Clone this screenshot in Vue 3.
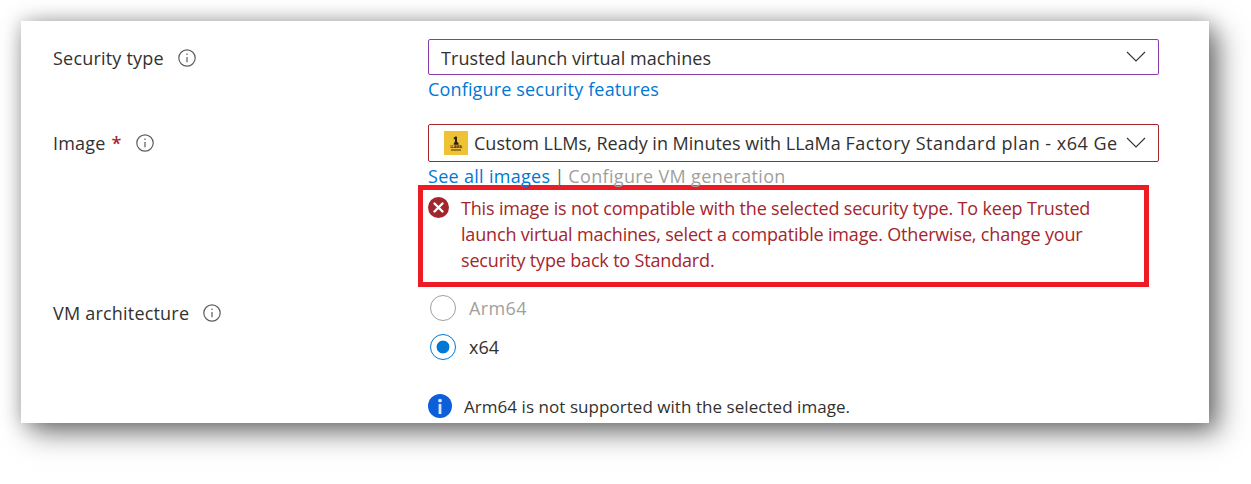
<template>
  <div class="page">
    <div class="card">
      <div class="row first">
        <div class="label">
          <span>Security type</span>
          <svg class="info" viewBox="0 0 18 18"><circle cx="9" cy="9" r="8.2" /><path d="M9 8v5.2M9 4.6v1.4" /></svg>
        </div>
        <div class="field">
          <div class="select purple">
            <span class="value">Trusted launch virtual machines</span>
            <svg class="chevron" viewBox="0 0 20 12"><path d="M1 1l9 9 9-9" /></svg>
          </div>
          <a class="link">Configure security features</a>
        </div>
      </div>

      <div class="row second">
        <div class="label">
          <span>Image <b class="req">*</b></span>
          <svg class="info" viewBox="0 0 18 18"><circle cx="9" cy="9" r="8.2" /><path d="M9 8v5.2M9 4.6v1.4" /></svg>
        </div>
        <div class="field">
          <div class="select red">
            <svg class="logo" viewBox="0 0 24 24">
              <rect width="24" height="24" fill="#eec234" />
              <path d="M9.8 6.6l2.2-1.4 1 .7v5.2l1.2.4.6 2.3H9.6l.4-2 .9-.6V7.9l-1.1.3z" fill="#2b2312" />
              <text x="12" y="17" text-anchor="middle" class="logo-text">LLAMA</text>
              <rect x="7" y="18.4" width="10" height="1.2" fill="#5e4e1c" />
            </svg>
            <span class="value">Custom LLMs, Ready in Minutes with LLaMa <span class="tail">Factory Standard plan - x64 Gen2</span></span>
            <svg class="chevron" viewBox="0 0 20 12"><path d="M1 1l9 9 9-9" /></svg>
          </div>
          <div class="links">
            <a class="link">See all images</a>
            <span class="sep">|</span>
            <span class="disabled">Configure VM generation</span>
          </div>
          <div class="error">
            <svg class="err-icon" viewBox="0 0 21 21">
              <circle cx="10.5" cy="10.5" r="10.5" fill="#a4262c" />
              <path d="M6.5 6.5l8 8M14.5 6.5l-8 8" stroke="#fff" stroke-width="2.4" stroke-linecap="round" />
            </svg>
            <p>This image is not compatible with the selected security type. To keep Trusted launch virtual machines, select a compatible image. Otherwise, change your security type back to Standard.</p>
          </div>
        </div>
      </div>

      <div class="row third">
        <div class="label">
          <span>VM architecture</span>
          <svg class="info" viewBox="0 0 18 18"><circle cx="9" cy="9" r="8.2" /><path d="M9 8v5.2M9 4.6v1.4" /></svg>
        </div>
        <div class="field">
          <div class="radio off"><i class="dot"></i><span>Arm64</span></div>
          <div class="radio on"><i class="dot"></i><span>x64</span></div>
          <div class="note">
            <svg class="note-icon" viewBox="0 0 24 24">
              <circle cx="12" cy="12" r="12" fill="#0b5fd8" />
              <rect x="10.6" y="10" width="2.8" height="10" fill="#d8e6fb" />
              <circle cx="12" cy="6.6" r="1.9" fill="#d8e6fb" />
            </svg>
            <span>Arm64 is not supported with the selected image.</span>
          </div>
        </div>
      </div>
    </div>
  </div>
</template>

<script setup>
</script>

<style>
body {
  background: #fff;
}
</style>

<style scoped>
.page {
  height: 484px;
  padding: 21px 0 0 21px;
  box-sizing: border-box;
  overflow: hidden;
}
.card {
  box-sizing: border-box;
  width: 1188px;
  height: 402px;
  padding: 18px 50px 0 32px;
  overflow: hidden;
  background: #fff;
  box-shadow: 10px 10px 26px rgba(0, 0, 0, 0.5), 0 0 18px rgba(0, 0, 0, 0.24);
  font-family: "Open Sans", "Noto Sans", sans-serif;
  font-size: 18px;
  color: #323130;
}
.row {
  display: grid;
  grid-template-columns: 375px 731px;
}
.second {
  margin-top: 21px;
}
.third {
  margin-top: 1px;
}
.label {
  display: flex;
  align-items: center;
  gap: 14px;
  height: 38px;
  letter-spacing: 0.2px;
}
.third .label {
  margin-top: 6px;
}
.req {
  margin-left: 1px;
  color: #a4262c;
  font-weight: 600;
}
.info {
  width: 18px;
  height: 18px;
  fill: none;
  stroke: #605e5c;
  stroke-width: 1.2;
}
.select {
  box-sizing: border-box;
  display: flex;
  align-items: center;
  height: 36px;
  padding: 0 12px;
  border: 1px solid #8a3ba8;
  border-radius: 2px;
  letter-spacing: 0.06px;
}
.select.purple .value {
  padding-top: 1px;
}
.select.red {
  height: 38px;
  padding-left: 15px;
  border-color: #a4262c;
  letter-spacing: 0;
}
.tail {
  letter-spacing: 0.5px;
}
.value {
  flex: 1;
  min-width: 0;
  overflow: hidden;
  white-space: nowrap;
}
.logo {
  flex: none;
  width: 24px;
  height: 24px;
  margin-right: 6px;
}
.logo-text {
  font-size: 3.4px;
  font-weight: 700;
  letter-spacing: 0;
  fill: #2b2312;
}
.chevron {
  flex: none;
  width: 20px;
  height: 12px;
  margin-left: 8px;
  fill: none;
  stroke: #323130;
  stroke-width: 1.1;
}
.link {
  color: #0078d4;
  letter-spacing: 0.16px;
}
.field > .link {
  display: block;
  line-height: 28px;
}
.links {
  display: flex;
  gap: 4px;
  height: 28px;
  line-height: 28px;
}
.links .link {
  letter-spacing: 0.3px;
}
.sep {
  color: #605e5c;
}
.disabled {
  color: #a19f9d;
  letter-spacing: 0.34px;
}
.error {
  box-sizing: border-box;
  display: flex;
  gap: 12px;
  width: 731px;
  height: 102px;
  margin: -5px 0 0 -10px;
  padding: 5px 20px 0 5px;
  border: 5px solid #ed1c24;
  background: #fff;
  color: #a4262c;
  letter-spacing: -0.17px;
}
.err-icon {
  flex: none;
  width: 21px;
  height: 21px;
  margin-top: 2px;
}
.error p {
  margin: 0;
  line-height: 26px;
}
.radio {
  display: flex;
  align-items: center;
  gap: 13px;
  height: 39px;
  padding-left: 2px;
}
.dot {
  box-sizing: border-box;
  width: 26px;
  height: 26px;
  border: 1px solid #a19f9d;
  border-radius: 50%;
}
.radio.off span {
  color: #a19f9d;
  letter-spacing: 0.4px;
}
.radio.on .dot {
  border-color: #0078d4;
  background: radial-gradient(circle, #0078d4 0 6px, #fff 6.8px);
}
.note {
  display: flex;
  align-items: center;
  gap: 12px;
  margin-top: 28px;
  font-size: 17px;
  letter-spacing: 0.05px;
}
.note-icon {
  flex: none;
  width: 24px;
  height: 24px;
}
</style>
